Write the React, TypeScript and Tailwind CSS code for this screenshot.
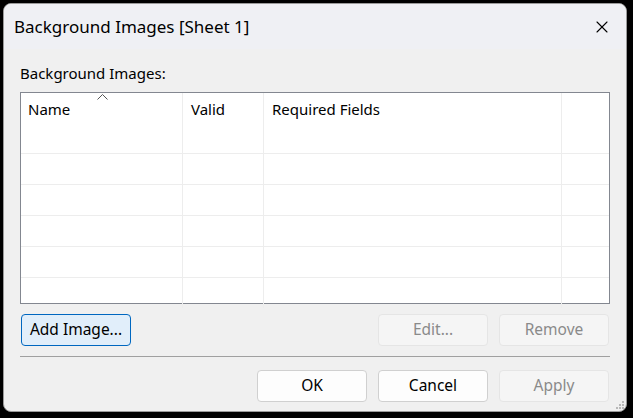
import { X } from 'lucide-react'

const font = { fontFamily: '"Segoe UI", "Noto Sans", "Liberation Sans", sans-serif' }

function Btn({
  children,
  variant = 'normal',
}: {
  children: React.ReactNode
  variant?: 'normal' | 'default' | 'disabled'
}) {
  const cls =
    variant === 'default'
      ? 'border-[#0067c0] bg-[#e1eefa] text-black'
      : variant === 'disabled'
        ? 'border-[#e5e5e5] bg-[#f5f5f5] text-[#8a8a8a]'
        : 'border-[#d0d0d0] bg-[#fdfdfd] text-black'
  return (
    <button className={`flex h-[32px] w-[110px] items-center justify-center rounded-[4px] border text-[15.5px] ${cls}`}>
      {children}
    </button>
  )
}

const rows = [0, 1, 2, 3, 4, 5]

export default function App() {
  return (
    <div className="h-[418px] w-[633px] bg-black p-[3px] pr-[6px] pb-[6px]" style={font}>
      <div className="flex h-full w-full flex-col overflow-hidden rounded-[8px] border border-[#9a9a9a] bg-[#f0f0f0]">
        {/* title bar */}
        <div className="flex h-[45px] shrink-0 items-center justify-between bg-[#eff0f4] pl-[10px] pr-[14px]">
          <span className="text-[17px] text-black">Background Images [Sheet 1]</span>
          <X className="h-[20px] w-[20px] text-black" strokeWidth={1.3} />
        </div>

        <div className="flex flex-1 flex-col px-[16px] pt-[14px]">
          <div className="text-[15px] leading-[20px] text-black">Background Images:</div>

          {/* list view */}
          <div className="mt-[9px] h-[212px] border border-[#838790] bg-white">
            <div className="relative flex h-[29px] text-[15px] text-black">
              <div className="flex w-[162px] items-center border-r border-[#ededed] pl-[7px] pt-[3px]">Name</div>
              <svg className="absolute left-[76px] top-[1px]" width="11" height="6" viewBox="0 0 11 6">
                <path d="M0.5 5.5 L5.5 0.5 L10.5 5.5" fill="none" stroke="#555" strokeWidth="1" />
              </svg>
              <div className="flex w-[81px] items-center border-r border-[#ededed] pl-[8px] pt-[3px]">Valid</div>
              <div className="flex w-[298px] items-center border-r border-[#ededed] pl-[8px] pt-[3px]">Required Fields</div>
              <div className="flex-1" />
            </div>
            {rows.map((r) => (
              <div key={r} className={`flex h-[31px] ${r > 0 ? 'border-t border-[#ededed]' : ''}`}>
                <div className="w-[162px] border-r border-[#ededed]" />
                <div className="w-[81px] border-r border-[#ededed]" />
                <div className="w-[298px] border-r border-[#ededed]" />
                <div className="flex-1" />
              </div>
            ))}
          </div>

          {/* list buttons */}
          <div className="mx-[1px] mt-[10px] flex items-center">
            <Btn variant="default">Add Image...</Btn>
            <div className="flex-1" />
            <div className="flex gap-[11px]">
              <Btn variant="disabled">Edit...</Btn>
              <Btn variant="disabled">Remove</Btn>
            </div>
          </div>

          <div className="mt-[10px] h-px bg-[#a0a0a0]" />

          <div className="mr-[1px] mt-[13px] flex justify-end gap-[11px]">
            <Btn>OK</Btn>
            <Btn>Cancel</Btn>
            <Btn variant="disabled">Apply</Btn>
          </div>
        </div>

        {/* resize grip */}
        <div className="relative h-0">
          <svg className="absolute bottom-[1px] right-[1px]" width="10" height="10" viewBox="0 0 10 10">
            <rect x="7" y="1" width="2" height="2" fill="#b8b8b8" />
            <rect x="4" y="4" width="2" height="2" fill="#b8b8b8" />
            <rect x="7" y="4" width="2" height="2" fill="#b8b8b8" />
            <rect x="1" y="7" width="2" height="2" fill="#b8b8b8" />
            <rect x="4" y="7" width="2" height="2" fill="#b8b8b8" />
            <rect x="7" y="7" width="2" height="2" fill="#b8b8b8" />
          </svg>
        </div>
      </div>
    </div>
  )
}
